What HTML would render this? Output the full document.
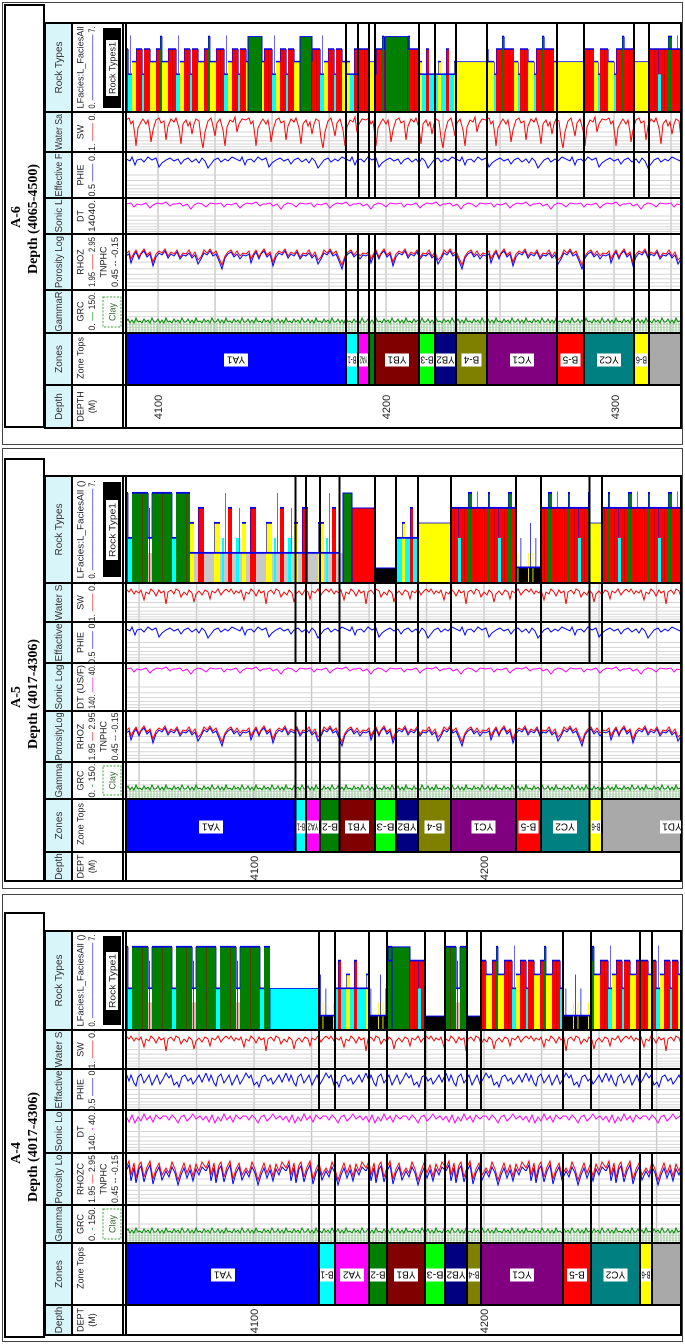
<!DOCTYPE html>
<html><head><meta charset="utf-8"><style>html,body{margin:0;padding:0;background:#fff}svg{display:block}</style></head>
<body>
<svg width="685" height="1344" xmlns="http://www.w3.org/2000/svg" xmlns:xlink="http://www.w3.org/1999/xlink" font-family="'Liberation Sans', sans-serif">
<defs>
<clipPath id="c0"><rect x="126" y="23" width="555" height="405"/></clipPath>
<clipPath id="c1"><rect x="126" y="476" width="555" height="405"/></clipPath>
<clipPath id="c2"><rect x="126" y="931" width="555" height="404"/></clipPath>

<pattern id="mA" patternUnits="userSpaceOnUse" width="48" height="88" viewBox="0 0 24 7" preserveAspectRatio="none">
<rect x="0" y="4" width="24" height="3" fill="#0ff"/><rect x="0" y="2" width="3" height="5" fill="#f00"/><rect x="3" y="3" width="3" height="4" fill="#ff0"/><rect x="6" y="2" width="2" height="5" fill="#f00"/><rect x="8" y="1" width="1" height="6" fill="#007f00"/><rect x="9" y="3" width="3" height="4" fill="#ff0"/><rect x="12" y="2" width="4" height="5" fill="#f00"/><rect x="18" y="3" width="2" height="4" fill="#ff0"/><rect x="20" y="2" width="3" height="5" fill="#f00"/>
<g fill="#a00"><rect x="1.5" y="2" width=".25" height="5"/><rect x="14" y="2" width=".25" height="5"/><rect x="21.5" y="2" width=".25" height="5"/></g>
<g fill="#00e"><rect x="0" y="1.93" width="3" height=".12"/><rect x="3" y="2.93" width="3" height=".12"/><rect x="6" y="1.93" width="2" height=".12"/><rect x="8" y=".93" width="1" height=".12"/><rect x="9" y="2.93" width="3" height=".12"/><rect x="12" y="1.93" width="4" height=".12"/><rect x="16" y="3.93" width="2" height=".12"/><rect x="18" y="2.93" width="2" height=".12"/><rect x="20" y="1.93" width="3" height=".12"/><rect x="23" y="3.93" width="1" height=".12"/><rect x="3" y="2" width=".3" height="1"/><rect x="6" y="2" width=".3" height="1"/><rect x="8" y="1" width=".3" height="1"/><rect x="8.9" y="1" width=".3" height="2"/><rect x="12" y="2" width=".3" height="1"/><rect x="16" y="2" width=".3" height="2"/><rect x="17" y=".9" width=".3" height="3"/><rect x="20" y="2" width=".3" height="1"/><rect x="23" y="2" width=".3" height="2"/></g>
</pattern>
<pattern id="mRY" patternUnits="userSpaceOnUse" width="40" height="88" viewBox="0 0 20 7" preserveAspectRatio="none">
<rect x="0" y="4" width="20" height="3" fill="#0ff"/><rect x="0" y="2" width="4" height="5" fill="#f00"/><rect x="4" y="3" width="3" height="4" fill="#ff0"/><rect x="8" y="2" width="3" height="5" fill="#f00"/><rect x="11" y="1" width="1" height="6" fill="#007f00"/><rect x="12" y="2" width="5" height="5" fill="#f00"/><rect x="17" y="3" width="2" height="4" fill="#ff0"/>
<g fill="#a00"><rect x="2" y="2" width=".25" height="5"/><rect x="14.5" y="2" width=".25" height="5"/></g>
<g fill="#00e"><rect x="0" y="1.93" width="4" height=".12"/><rect x="4" y="2.93" width="3" height=".12"/><rect x="7" y="3.93" width="1" height=".12"/><rect x="8" y="1.93" width="3" height=".12"/><rect x="11" y=".93" width="1" height=".12"/><rect x="12" y="1.93" width="5" height=".12"/><rect x="17" y="2.93" width="2" height=".12"/><rect x="19" y="3.93" width="1" height=".12"/><rect x="4" y="2" width=".3" height="1"/><rect x="7" y="3" width=".3" height="1"/><rect x="8" y="2" width=".3" height="2"/><rect x="11" y="1" width=".3" height="1"/><rect x="12" y="1" width=".3" height="1"/><rect x="19" y="3" width=".3" height="1"/></g>
</pattern>
<pattern id="mC" patternUnits="userSpaceOnUse" width="36" height="88" viewBox="0 0 18 7" preserveAspectRatio="none">
<rect x="0" y="4" width="18" height="3" fill="#0ff"/><rect x="3" y="3" width="1.5" height="4" fill="#ff0"/><rect x="7" y="2" width="1.5" height="5" fill="#f00"/><rect x="11" y="3" width="2" height="4" fill="#ff0"/><rect x="15" y="2" width="1.5" height="5" fill="#f00"/>
<g fill="#00e"><rect x="0" y="3.93" width="18" height=".12"/><rect x="3" y="3" width=".3" height="1"/><rect x="7" y="2" width=".3" height="2"/><rect x="11" y="3" width=".3" height="1"/><rect x="15" y="2" width=".3" height="2"/><rect x="3" y="2.93" width="1.5" height=".12"/><rect x="11" y="2.93" width="2" height=".12"/><rect x="7" y="1.93" width="1.5" height=".12"/><rect x="15" y="1.93" width="1.5" height=".12"/></g>
</pattern>
<pattern id="mR" patternUnits="userSpaceOnUse" width="40" height="88" viewBox="0 0 20 7" preserveAspectRatio="none">
<rect x="0" y="2" width="20" height="5" fill="#f00"/><rect x="4" y="1" width="1" height="6" fill="#007f00"/><rect x="9" y="4" width="1.5" height="3" fill="#0ff"/><rect x="14" y="1" width="2" height="6" fill="#007f00"/>
<g fill="#a00"><rect x="2" y="2" width=".25" height="5"/><rect x="7" y="2" width=".25" height="5"/><rect x="12" y="2" width=".25" height="5"/><rect x="17.5" y="2" width=".25" height="5"/></g>
<g fill="#00e"><rect x="0" y="1.93" width="20" height=".12"/><rect x="4" y=".93" width="1" height=".12"/><rect x="14" y=".93" width="2" height=".12"/><rect x="4" y="1" width=".3" height="1"/><rect x="14" y="1" width=".3" height="1"/><rect x="9" y="2" width=".3" height="2"/><rect x="18.7" y=".9" width=".3" height="1.1"/></g>
</pattern>
<pattern id="mG" patternUnits="userSpaceOnUse" width="44" height="88" viewBox="0 0 22 7" preserveAspectRatio="none">
<rect x="0" y="5" width="22" height="2" fill="#e8b8b8"/><rect x="0" y="1" width="8" height="6" fill="#007f00"/><rect x="8.5" y="2" width=".5" height="5" fill="#f00"/><rect x="10" y="1" width="10" height="6" fill="#007f00"/><rect x="20" y="4" width="2" height="3" fill="#0ff"/><rect x="5" y="1" width=".25" height="6" fill="#a00"/><rect x="15" y="1" width=".25" height="6" fill="#a00"/>
<g fill="#00e"><rect x="0" y=".93" width="8" height=".12"/><rect x="10" y=".93" width="10" height=".12"/><rect x="20" y="3.93" width="2" height=".12"/><rect x="8" y="1" width=".3" height="3"/><rect x="8" y="3.93" width="2" height=".12"/><rect x="9.8" y="1" width=".3" height="3"/><rect x="19.9" y="1" width=".3" height="3"/></g>
</pattern>
<pattern id="mGY" patternUnits="userSpaceOnUse" width="52" height="88" viewBox="0 0 26 7" preserveAspectRatio="none">
<rect x="0" y="5" width="26" height="2" fill="#c8c8c8"/><rect x="3" y="3" width="3" height="4" fill="#ff0"/><rect x="7" y="4" width="1" height="3" fill="#0ff"/><rect x="10" y="2" width="2" height="5" fill="#f00"/><rect x="14" y="4" width="1.5" height="3" fill="#0ff"/><rect x="17" y="3" width="2" height="4" fill="#ff0"/><rect x="21" y="2" width="3" height="5" fill="#f00"/>
<g fill="#00e"><rect x="0" y="4.93" width="26" height=".12"/><rect x="3" y="2.93" width="3" height=".12"/><rect x="10" y="1.93" width="2" height=".12"/><rect x="17" y="2.93" width="2" height=".12"/><rect x="21" y="1.93" width="3" height=".12"/><rect x="8.5" y="1" width=".3" height="4"/><rect x="15.5" y="2" width=".3" height="3"/><rect x="3" y="3" width=".3" height="2"/><rect x="21" y="2" width=".3" height="3"/></g>
</pattern>
<pattern id="mK" patternUnits="userSpaceOnUse" width="15" height="88" viewBox="0 0 10 7" preserveAspectRatio="none">
<rect x="0" y="6" width="10" height="1" fill="#000"/><rect x="2" y="5" width=".6" height="2" fill="#ff0"/><rect x="5" y="5" width=".6" height="2" fill="#ff0"/>
<g fill="#00e"><rect x="0" y="5.9" width="10" height=".12"/><rect x="3.5" y="3" width=".5" height="3"/><rect x="7" y="4" width=".5" height="2"/></g>
</pattern>

<pattern id="a6A" xlink:href="#mA" y="24" height="88"/><pattern id="a6RY" xlink:href="#mRY" y="24" height="88"/><pattern id="a6C" xlink:href="#mC" y="24" height="88"/><pattern id="a6R" xlink:href="#mR" y="24" height="88"/>
<pattern id="a5G" xlink:href="#mG" y="478" height="105"/><pattern id="a5GY" xlink:href="#mGY" y="478" height="105"/><pattern id="a5C" xlink:href="#mC" y="478" height="105"/><pattern id="a5R" xlink:href="#mR" y="478" height="105"/><pattern id="a5K" xlink:href="#mK" y="478" height="105"/>
<pattern id="a4G" xlink:href="#mG" y="933" height="97"/><pattern id="a4K" xlink:href="#mK" y="933" height="97"/><pattern id="a4C" xlink:href="#mC" y="933" height="97"/><pattern id="a4R" xlink:href="#mR" y="933" height="97"/><pattern id="a4A" xlink:href="#mA" y="933" height="97"/><pattern id="a4RY" xlink:href="#mRY" y="933" height="97"/>

<pattern id="sw1" patternUnits="userSpaceOnUse" width="120" height="60"><polyline fill="none" stroke="#f00" points="0,8 3,6 5,12 7,9 9,24 10,34 12,16 15,10 17,7 20,12 22,8 24,20 25,30 27,18 30,8 33,6 35,11 38,9 40,28 42,14 45,7 48,10 50,6 53,16 55,32 57,12 60,8 62,14 64,10 66,22 68,12 70,7 73,9 75,26 77,36 79,20 82,9 85,6 87,14 89,24 91,11 94,7 97,18 99,34 101,15 104,8 107,10 109,5 111,20 113,12 116,7 120,8"/></pattern>
<pattern id="sw2" patternUnits="userSpaceOnUse" width="100" height="60"><polyline fill="none" stroke="#f00" points="0,6 3,9 5,6 8,11 10,8 13,10 15,7 18,17 20,9 23,11 25,6 28,9 30,13 33,7 35,10 38,8 40,21 42,9 45,7 48,11 50,6 53,8 55,14 58,9 61,12 63,7 66,10 68,19 70,11 73,8 76,12 79,7 82,9 84,16 86,8 89,10 92,6 95,12 97,9 100,6"/></pattern>
<pattern id="ph1" patternUnits="userSpaceOnUse" width="110" height="60"><polyline fill="none" stroke="#00f" points="0,7 4,9 6,5 9,13 11,8 15,7 18,10 22,5 26,8 30,6 33,15 36,11 40,8 44,6 48,9 52,7 55,12 58,8 62,6 66,10 70,7 73,11 76,6 79,9 82,16 85,12 88,8 92,6 95,10 99,7 102,9 106,5 110,7"/></pattern>
<pattern id="ph2" patternUnits="userSpaceOnUse" width="80" height="60"><polyline fill="none" stroke="#00f" points="0,4 3,12 5,6 8,14 10,17 12,8 15,5 18,14 20,11 23,6 26,16 28,12 31,6 34,15 37,10 40,4 43,9 45,6 48,16 51,13 53,18 56,8 59,6 62,12 65,9 67,15 70,11 73,6 76,13 80,4"/></pattern>
<pattern id="so1" patternUnits="userSpaceOnUse" width="90" height="60"><polyline fill="none" stroke="#f0f" points="0,6 5,5 8,9 11,6 15,7 20,5 24,10 27,7 31,5 36,6 40,4 44,8 47,6 50,6 54,5 57,8 61,6 65,11 68,7 72,5 76,6 80,9 84,5 90,6"/></pattern>
<pattern id="so2" patternUnits="userSpaceOnUse" width="80" height="60"><polyline fill="none" stroke="#f0f" points="0,6 3,12 6,5 9,13 12,7 15,11 18,4 21,10 24,6 27,12 30,5 34,9 37,6 40,6 43,10 46,5 49,8 52,13 55,7 58,5 61,11 64,8 67,4 70,9 74,6 77,10 80,6"/></pattern>
<pattern id="pr1" patternUnits="userSpaceOnUse" width="120" height="70"><polyline fill="none" stroke="#00f" points="0,22 3,20 5,29 8,21 10,18 13,25 15,20 18,17 21,23 24,20 27,32 30,23 33,19 36,21 39,17 42,24 45,20 48,22 51,18 54,25 57,21 60,22 63,19 66,24 69,21 72,30 75,25 78,19 81,21 84,17 87,22 90,20 93,27 96,35 99,24 102,20 105,18 108,23 111,20 114,25 117,21 120,22"/><polyline fill="none" stroke="#f00" points="0,20 3,17 5,25 8,19 10,16 13,23 15,19 18,15 21,21 24,18 27,28 30,20 33,17 36,19 39,15 42,22 45,18 48,20 51,16 54,23 57,19 60,20 63,16 66,22 69,18 72,26 75,23 78,16 81,19 84,15 87,20 90,17 93,24 96,31 99,22 102,18 105,16 108,21 111,17 114,22 117,19 120,20"/></pattern>
<pattern id="pr2" patternUnits="userSpaceOnUse" width="80" height="70"><polyline fill="none" stroke="#00f" points="0,18 3,12 5,28 8,15 10,30 13,16 15,13 18,29 21,18 24,12 27,31 30,20 33,14 36,27 40,18 43,24 46,14 49,20 52,32 55,22 58,15 61,25 64,17 67,28 70,16 73,22 76,14 80,18"/><polyline fill="none" stroke="#f00" points="0,15 3,8 5,22 8,10 10,25 13,12 15,9 18,24 21,14 24,8 27,26 30,16 33,10 36,22 40,15 43,20 46,9 49,16 52,27 55,18 58,10 61,20 64,12 67,23 70,11 73,18 76,9 80,15"/></pattern>
<pattern id="gr1" patternUnits="userSpaceOnUse" width="30" height="60"><path stroke="#8c8" d="M1,33V60M4,33V60M7,32V60M10,30V60M13,33V60M16,34V60M19,31V60M22,32V60M25,33V60M28,32V60"/><polyline fill="none" stroke="#080" points="0,32 2,29 4,33 6,30 8,33 10,28 12,32 14,31 16,33 18,29 20,32 22,30 24,33 26,28 28,32 30,32"/></pattern>
<pattern id="gr2" patternUnits="userSpaceOnUse" width="30" height="60"><path stroke="#8c8" d="M1,28V60M4,28V60M7,27V60M10,25V60M13,28V60M16,29V60M19,26V60M22,27V60M25,28V60M28,27V60"/><polyline fill="none" stroke="#080" points="0,27 2,24 4,28 6,25 8,28 10,23 12,27 14,26 16,28 18,24 20,27 22,25 24,28 26,23 28,27 30,27"/></pattern>

<pattern id="c6sw" xlink:href="#sw1" x="126" y="112"/><pattern id="c6ph" xlink:href="#ph1" x="126" y="152"/><pattern id="c6so" xlink:href="#so1" x="126" y="198"/><pattern id="c6pr" xlink:href="#pr1" x="126" y="234"/><pattern id="c6gr" xlink:href="#gr1" x="126" y="290"/>
<pattern id="c5sw" xlink:href="#sw2" x="126" y="583"/><pattern id="c5ph" xlink:href="#ph1" x="126" y="622"/><pattern id="c5so" xlink:href="#so1" x="126" y="663"/><pattern id="c5pr" xlink:href="#pr1" x="126" y="711"/><pattern id="c5gr" xlink:href="#gr2" x="126" y="762"/>
<pattern id="c4sw" xlink:href="#sw2" x="126" y="1030"/><pattern id="c4ph" xlink:href="#ph2" x="126" y="1069"/><pattern id="c4so" xlink:href="#so2" x="126" y="1110"/><pattern id="c4pr" xlink:href="#pr2" x="126" y="1153"/><pattern id="c4gr" xlink:href="#gr2" x="126" y="1205"/>

<pattern id="vg6" patternUnits="userSpaceOnUse" x="157.4" y="0" width="57" height="10"><rect width="1.3" height="10" fill="#c4c4c4"/></pattern>
<pattern id="vg5" patternUnits="userSpaceOnUse" x="253.4" y="0" width="57.5" height="10"><rect width="1.3" height="10" fill="#c4c4c4"/></pattern>
</defs>
<rect width="685" height="1344" fill="#fff"/>
<rect x="2.5" y="2.5" width="680" height="442" fill="none" stroke="#444" stroke-width="1"/>
<rect x="2.5" y="448.5" width="680" height="440" fill="none" stroke="#444" stroke-width="1"/>
<rect x="2.5" y="894.5" width="680" height="447" fill="none" stroke="#444" stroke-width="1"/>

<rect x="45" y="23" width="27" height="405" fill="#d8f5fa"/>
<rect x="45" y="476" width="27" height="405" fill="#d8f5fa"/>
<rect x="45" y="931" width="27" height="404" fill="#d8f5fa"/>

<rect x="126" y="112" width="555" height="221" fill="url(#vg6)"/>
<rect x="126" y="583" width="555" height="216" fill="url(#vg5)"/>
<rect x="126" y="1030" width="555" height="213" fill="url(#vg5)"/>
<path stroke="#d6d6d6" stroke-width="1" fill="none" d="M126,132H681M126,136.8H681M126,140.8H681M126,144H681M126,146.8H681M126,149.2H681M126,175H681M126,180.5H681M126,185.1H681M126,188.8H681M126,192H681M126,194.8H681M126,216H681M126,220.3H681M126,223.9H681M126,226.8H681M126,229.3H681M126,231.5H681M126,262H681M126,268.7H681M126,274.3H681M126,278.8H681M126,282.7H681M126,286.1H681M126,311.5H681M126,316.7H681M126,321H681M126,324.4H681M126,327.4H681M126,330H681
M126,602.5H681M126,607.2H681M126,611.1H681M126,614.2H681M126,616.9H681M126,619.3H681M126,642.5H681M126,647.4H681M126,651.5H681M126,654.8H681M126,657.7H681M126,660.1H681M126,687H681M126,692.8H681M126,697.6H681M126,701.4H681M126,704.8H681M126,707.6H681M126,736.5H681M126,742.6H681M126,747.7H681M126,751.8H681M126,755.4H681M126,758.4H681M126,780.5H681M126,784.9H681M126,788.6H681M126,791.6H681M126,794.2H681M126,796.4H681
M126,1049.5H681M126,1054.2H681M126,1058.1H681M126,1061.2H681M126,1063.9H681M126,1066.3H681M126,1089.5H681M126,1094.4H681M126,1098.5H681M126,1101.8H681M126,1104.7H681M126,1107.1H681M126,1131.5H681M126,1136.7H681M126,1141H681M126,1144.4H681M126,1147.4H681M126,1150H681M126,1179H681M126,1185.2H681M126,1190.4H681M126,1194.6H681M126,1198.2H681M126,1201.4H681M126,1224H681M126,1228.6H681M126,1232.4H681M126,1235.4H681M126,1238.1H681M126,1240.3H681"/>

<rect x="126" y="24" width="122" height="88" fill="url(#a6A)"/>
<rect x="248" y="36.6" width="14" height="75.4" fill="#007f00" stroke="#00e"/>
<rect x="262" y="24" width="38" height="88" fill="url(#a6A)"/>
<rect x="300" y="36.6" width="12" height="75.4" fill="#007f00" stroke="#00e"/>
<rect x="312" y="24" width="34" height="88" fill="url(#a6A)"/>
<rect x="346" y="24" width="12" height="88" fill="url(#a6C)"/>
<rect x="358" y="24" width="11" height="88" fill="url(#a6R)"/>
<rect x="369" y="61.7" width="6" height="50.3" fill="#ff0" stroke="#00e" stroke-width=".8"/>
<rect x="375" y="24" width="10" height="88" fill="url(#a6RY)"/>
<rect x="385" y="36.6" width="23" height="75.4" fill="#007f00" stroke="#00e"/>
<rect x="408" y="24" width="11" height="88" fill="url(#a6R)"/>
<rect x="419" y="24" width="37" height="88" fill="url(#a6C)"/>
<rect x="456" y="61.7" width="31" height="50.3" fill="#ff0" stroke="#00e" stroke-width=".8"/>
<rect x="487" y="24" width="70" height="88" fill="url(#a6RY)"/>
<rect x="557" y="61.7" width="27" height="50.3" fill="#ff0" stroke="#00e" stroke-width=".8"/>
<rect x="584" y="24" width="50" height="88" fill="url(#a6RY)"/>
<rect x="634" y="61.7" width="15" height="50.3" fill="#ff0" stroke="#00e" stroke-width=".8"/>
<rect x="649" y="24" width="32" height="88" fill="url(#a6R)"/>

<rect x="126" y="478" width="64" height="105" fill="url(#a5G)"/>
<rect x="190" y="478" width="150" height="105" fill="url(#a5GY)"/>
<rect x="340" y="553" width="35" height="30" fill="#c8c8c8"/>
<rect x="343" y="493" width="9" height="90" fill="#007f00" stroke="#00e"/>
<rect x="352" y="508" width="23" height="75" fill="#f00" stroke="#00e"/>
<rect x="375" y="568" width="21" height="15" fill="#000" stroke="#00e"/>
<rect x="396" y="478" width="22" height="105" fill="url(#a5C)"/>
<rect x="418" y="523" width="33" height="60" fill="#ff0" stroke="#00e" stroke-width=".8"/>
<rect x="451" y="478" width="65" height="105" fill="url(#a5R)"/>
<rect x="516" y="478" width="25" height="105" fill="url(#a5K)"/>
<rect x="541" y="478" width="49" height="105" fill="url(#a5R)"/>
<rect x="590" y="523" width="12" height="60" fill="#ff0" stroke="#00e" stroke-width=".8"/>
<rect x="602" y="478" width="79" height="105" fill="url(#a5R)"/>

<rect x="126" y="933" width="144" height="97" fill="url(#a4G)"/>
<rect x="270" y="988.4" width="49" height="41.6" fill="#0ff" stroke="#00e" stroke-width=".8"/>
<rect x="319" y="933" width="16" height="97" fill="url(#a4K)"/>
<rect x="335" y="933" width="34" height="97" fill="url(#a4C)"/>
<rect x="369" y="933" width="18" height="97" fill="url(#a4K)"/>
<rect x="387" y="933" width="5" height="97" fill="url(#a4R)"/>
<rect x="392" y="946.9" width="18" height="83.1" fill="#007f00" stroke="#00e"/>
<rect x="410" y="933" width="15" height="97" fill="url(#a4R)"/>
<rect x="425" y="1016.1" width="20" height="13.9" fill="#000" stroke="#00e"/>
<rect x="445" y="933" width="22" height="97" fill="url(#a4G)"/>
<rect x="467" y="1016.1" width="14" height="13.9" fill="#000" stroke="#00e"/>
<rect x="481" y="933" width="82" height="97" fill="url(#a4A)"/>
<rect x="563" y="933" width="28" height="97" fill="url(#a4K)"/>
<rect x="591" y="933" width="49" height="97" fill="url(#a4A)"/>
<rect x="640" y="933" width="12" height="97" fill="url(#a4RY)"/>
<rect x="652" y="933" width="29" height="97" fill="url(#a4A)"/>

<rect x="126" y="113" width="555" height="39" fill="url(#c6sw)"/>
<rect x="126" y="153" width="555" height="45" fill="url(#c6ph)"/>
<rect x="126" y="199" width="555" height="35" fill="url(#c6so)"/>
<rect x="126" y="235" width="555" height="55" fill="url(#c6pr)"/>
<rect x="126" y="291" width="555" height="42" fill="url(#c6gr)"/>
<rect x="126" y="584" width="555" height="38" fill="url(#c5sw)"/>
<rect x="126" y="623" width="555" height="40" fill="url(#c5ph)"/>
<rect x="126" y="664" width="555" height="47" fill="url(#c5so)"/>
<rect x="126" y="712" width="555" height="50" fill="url(#c5pr)"/>
<rect x="126" y="763" width="555" height="36" fill="url(#c5gr)"/>
<rect x="126" y="1031" width="555" height="38" fill="url(#c4sw)"/>
<rect x="126" y="1070" width="555" height="40" fill="url(#c4ph)"/>
<rect x="126" y="1111" width="555" height="42" fill="url(#c4so)"/>
<rect x="126" y="1154" width="555" height="51" fill="url(#c4pr)"/>
<rect x="126" y="1206" width="555" height="37" fill="url(#c4gr)"/>

<g>
<rect x="126" y="333" width="220" height="52" fill="#00f"/><rect x="346" y="333" width="12" height="52" fill="#0ff"/><rect x="358" y="333" width="11" height="52" fill="#f0f"/><rect x="369" y="333" width="6" height="52" fill="#007f00"/><rect x="375" y="333" width="44" height="52" fill="#800000"/><rect x="419" y="333" width="16" height="52" fill="#0f0"/><rect x="435" y="333" width="21" height="52" fill="#000080"/><rect x="456" y="333" width="31" height="52" fill="#808000"/><rect x="487" y="333" width="70" height="52" fill="#800080"/><rect x="557" y="333" width="27" height="52" fill="#f00"/><rect x="584" y="333" width="50" height="52" fill="#008080"/><rect x="634" y="333" width="15" height="52" fill="#ff0"/><rect x="649" y="333" width="32" height="52" fill="#a9a9a9"/>
<rect x="126" y="799" width="169.5" height="53" fill="#00f"/><rect x="295.5" y="799" width="10.5" height="53" fill="#0ff"/><rect x="306" y="799" width="14" height="53" fill="#f0f"/><rect x="320" y="799" width="19.5" height="53" fill="#007f00"/><rect x="339.5" y="799" width="35.5" height="53" fill="#800000"/><rect x="375" y="799" width="21" height="53" fill="#0f0"/><rect x="396" y="799" width="22" height="53" fill="#000080"/><rect x="418" y="799" width="33" height="53" fill="#808000"/><rect x="451" y="799" width="65" height="53" fill="#800080"/><rect x="516" y="799" width="25" height="53" fill="#f00"/><rect x="541" y="799" width="48.5" height="53" fill="#008080"/><rect x="589.5" y="799" width="12.5" height="53" fill="#ff0"/><rect x="602" y="799" width="79" height="53" fill="#a9a9a9"/>
<rect x="126" y="1243" width="193" height="62" fill="#00f"/><rect x="319" y="1243" width="16" height="62" fill="#0ff"/><rect x="335" y="1243" width="34" height="62" fill="#f0f"/><rect x="369" y="1243" width="18" height="62" fill="#007f00"/><rect x="387" y="1243" width="38" height="62" fill="#800000"/><rect x="425" y="1243" width="20" height="62" fill="#0f0"/><rect x="445" y="1243" width="22" height="62" fill="#000080"/><rect x="467" y="1243" width="14" height="62" fill="#808000"/><rect x="481" y="1243" width="82" height="62" fill="#800080"/><rect x="563" y="1243" width="28" height="62" fill="#f00"/><rect x="591" y="1243" width="49" height="62" fill="#008080"/><rect x="640" y="1243" width="12" height="62" fill="#ff0"/><rect x="652" y="1243" width="29" height="62" fill="#a9a9a9"/>
</g>

<path stroke="#000" stroke-width="2" fill="none" d="M346,23V198M346,234V385M358,23V198M358,234V385M369,23V198M369,234V385M375,23V198M375,234V385M419,23V198M419,234V385M435,23V198M435,234V385M456,23V198M456,234V385M487,23V198M487,234V385M557,23V198M557,234V385M584,23V198M584,234V385M634,23V198M634,234V385M649,23V198M649,234V385
M295.5,476V663M295.5,711V852M306,476V663M306,711V852M320,476V663M320,711V852M339.5,476V663M339.5,711V852M375,476V663M375,711V852M396,476V663M396,711V852M418,476V663M418,711V852M451,476V663M451,711V852M516,476V663M516,711V852M541,476V663M541,711V852M589.5,476V663M589.5,711V852M602,476V663M602,711V852
M319,931V1110M319,1153V1305M335,931V1110M335,1153V1305M369,931V1110M369,1153V1305M387,931V1110M387,1153V1305M425,931V1110M425,1153V1305M445,931V1110M445,1153V1305M467,931V1110M467,1153V1305M481,931V1110M481,1153V1305M563,931V1110M563,1153V1305M591,931V1110M591,1153V1305M640,931V1110M640,1153V1305M652,931V1110M652,1153V1305"/>

<path stroke="#000" stroke-width="2" fill="none" d="M44,23H682M44,112H682M44,152H682M44,198H682M44,234H682M44,290H682M44,333H682M44,385H682M44,428H682M45,23V428M72,23V428M123,23V428M126,23V428M681,23V428
M44,476H682M44,583H682M44,622H682M44,663H682M44,711H682M44,762H682M44,799H682M44,852H682M44,881H682M45,476V881M72,476V881M123,476V881M126,476V881M681,476V881
M44,931H682M44,1030H682M44,1069H682M44,1110H682M44,1153H682M44,1205H682M44,1243H682M44,1305H682M44,1335H682M45,931V1335M72,931V1335M123,931V1335M126,931V1335M681,931V1335"/>

<rect x="5" y="5" width="39" height="422" fill="#fff" stroke="#000" stroke-width="2"/>
<rect x="5" y="459" width="39" height="422" fill="#fff" stroke="#000" stroke-width="2"/>
<rect x="5" y="913" width="39" height="424" fill="#fff" stroke="#000" stroke-width="2"/>
<g font-family="'Liberation Serif', serif" font-weight="bold" text-anchor="middle" fill="#000">
<text transform="translate(20,217) rotate(-90)" font-size="14">A-6</text>
<text transform="translate(37,219) rotate(-90)" font-size="14">Depth (4065-4500)</text>
<text transform="translate(20,697) rotate(-90)" font-size="14">A-5</text>
<text transform="translate(37,694) rotate(-90)" font-size="14">Depth (4017-4306)</text>
<text transform="translate(20,1153) rotate(-90)" font-size="14">A-4</text>
<text transform="translate(37,1147) rotate(-90)" font-size="14">Depth (4017-4306)</text>
</g>

<g font-size="10" fill="#333" text-anchor="middle">
<text transform="translate(62,67.5) rotate(-90)">Rock Types</text>
<text transform="translate(62,132) rotate(-90)" textLength="36" lengthAdjust="spacingAndGlyphs">Water Sa</text>
<text transform="translate(62,175) rotate(-90)" textLength="43" lengthAdjust="spacingAndGlyphs">Effective F</text>
<text transform="translate(62,216) rotate(-90)" textLength="33" lengthAdjust="spacingAndGlyphs">Sonic L</text>
<text transform="translate(62,262) rotate(-90)" textLength="52" lengthAdjust="spacingAndGlyphs">Porosity Log</text>
<text transform="translate(62,311.5) rotate(-90)" textLength="40" lengthAdjust="spacingAndGlyphs">GammaR</text>
<text transform="translate(62,359) rotate(-90)">Zones</text>
<text transform="translate(62,406.5) rotate(-90)">Depth</text>

<text transform="translate(62,529.5) rotate(-90)">Rock Types</text>
<text transform="translate(62,602.5) rotate(-90)">Water S</text>
<text transform="translate(62,642.5) rotate(-90)" textLength="38" lengthAdjust="spacingAndGlyphs">Effactive</text>
<text transform="translate(62,687) rotate(-90)" textLength="45" lengthAdjust="spacingAndGlyphs">Sonic Log</text>
<text transform="translate(62,736.5) rotate(-90)" textLength="48" lengthAdjust="spacingAndGlyphs">PorosityLog</text>
<text transform="translate(62,780.5) rotate(-90)" textLength="34" lengthAdjust="spacingAndGlyphs">Gamma</text>
<text transform="translate(62,825.5) rotate(-90)">Zones</text>
<text transform="translate(62,866.5) rotate(-90)">Depth</text>

<text transform="translate(62,980.5) rotate(-90)">Rock Types</text>
<text transform="translate(62,1049.5) rotate(-90)">Water S</text>
<text transform="translate(62,1089.5) rotate(-90)" textLength="38" lengthAdjust="spacingAndGlyphs">Effactive</text>
<text transform="translate(62,1131.5) rotate(-90)" textLength="40" lengthAdjust="spacingAndGlyphs">Sonic Lo</text>
<text transform="translate(62,1179) rotate(-90)" textLength="49" lengthAdjust="spacingAndGlyphs">Porosity Lo</text>
<text transform="translate(62,1224) rotate(-90)" textLength="35" lengthAdjust="spacingAndGlyphs">Gamma</text>
<text transform="translate(62,1274) rotate(-90)">Zones</text>
<text transform="translate(62,1320) rotate(-90)">Depth</text>
</g>

<g font-size="9" fill="#222" text-anchor="middle">
<text transform="translate(83.5,67.5) rotate(-90)" textLength="82" lengthAdjust="spacingAndGlyphs">LFacies:L_FaciesAll</text>
<text transform="translate(95,67.5) rotate(-90)" textLength="82" lengthAdjust="spacingAndGlyphs">0. <tspan fill="#00f">—————————</tspan> 7.</text>
<rect x="103" y="28" width="18" height="80" fill="#000"/><rect x="106" y="40" width="12" height="56" fill="#fff"/>
<text transform="translate(115.5,68) rotate(-90)" textLength="52" lengthAdjust="spacingAndGlyphs">Rock Types1</text>
<text transform="translate(83.5,132) rotate(-90)">SW</text>
<text transform="translate(95,132) rotate(-90)">1. <tspan fill="#f00">——</tspan> 0.</text>
<text transform="translate(83.5,175) rotate(-90)">PHIE</text>
<text transform="translate(95,175) rotate(-90)">0.5 <tspan fill="#00f">——</tspan> 0.</text>
<text transform="translate(83.5,216) rotate(-90)">DT</text>
<text transform="translate(95,216) rotate(-90)" textLength="32" lengthAdjust="spacingAndGlyphs">14040.</text>
<text transform="translate(83.5,262) rotate(-90)">RHOZ</text>
<text transform="translate(95,262) rotate(-90)" textLength="50" lengthAdjust="spacingAndGlyphs">1.95 <tspan fill="#f00">——</tspan> 2.95</text>
<text transform="translate(106.5,262) rotate(-90)">TNPHC</text>
<text transform="translate(118,262) rotate(-90)" textLength="50" lengthAdjust="spacingAndGlyphs">0.45 <tspan fill="#00f">--</tspan> -0.15</text>
<text transform="translate(83.5,311.5) rotate(-90)">GRC</text>
<text transform="translate(95,311.5) rotate(-90)" textLength="38" lengthAdjust="spacingAndGlyphs">0. <tspan fill="#080">—</tspan> 150.</text>
<rect x="103" y="297" width="18" height="30" fill="#fff" stroke="#3a3" stroke-dasharray="2,1.5"/>
<text transform="translate(115.5,312) rotate(-90)" fill="#363">Clay</text>
<text transform="translate(83.5,337) rotate(-90)" text-anchor="end">Zone Tops</text>
<text transform="translate(83.5,406.5) rotate(-90)">DEPTH</text>
<text transform="translate(95,406.5) rotate(-90)">(M)</text>

<text transform="translate(83.5,529.5) rotate(-90)" textLength="98" lengthAdjust="spacingAndGlyphs">LFacies:L_FaciesAll ()</text>
<text transform="translate(95,529.5) rotate(-90)" textLength="98" lengthAdjust="spacingAndGlyphs">0. <tspan fill="#00f">———————————</tspan> 7.</text>
<rect x="103" y="482" width="18" height="95" fill="#000"/><rect x="106" y="500" width="12" height="60" fill="#fff"/>
<text transform="translate(115.5,530) rotate(-90)" textLength="54" lengthAdjust="spacingAndGlyphs">Rock Type1</text>
<text transform="translate(83.5,602.5) rotate(-90)">SW</text>
<text transform="translate(95,602.5) rotate(-90)">1. <tspan fill="#f00">——</tspan> 0.</text>
<text transform="translate(83.5,642.5) rotate(-90)">PHIE</text>
<text transform="translate(95,642.5) rotate(-90)">0.5 <tspan fill="#00f">——</tspan> 0.</text>
<text transform="translate(83.5,687) rotate(-90)" textLength="44" lengthAdjust="spacingAndGlyphs">DT (US/F)</text>
<text transform="translate(95,687) rotate(-90)" textLength="44" lengthAdjust="spacingAndGlyphs">140. <tspan fill="#f0f">——</tspan> 40.</text>
<text transform="translate(83.5,736.5) rotate(-90)">RHOZ</text>
<text transform="translate(95,736.5) rotate(-90)" textLength="48" lengthAdjust="spacingAndGlyphs">1.95 <tspan fill="#f00">—</tspan> 2.95</text>
<text transform="translate(106.5,736.5) rotate(-90)">TNPHC</text>
<text transform="translate(118,736.5) rotate(-90)" textLength="48" lengthAdjust="spacingAndGlyphs">0.45 <tspan fill="#00f">--</tspan> -0.15</text>
<text transform="translate(83.5,780.5) rotate(-90)">GRC</text>
<text transform="translate(95,780.5) rotate(-90)" textLength="34" lengthAdjust="spacingAndGlyphs">0. <tspan fill="#080">-</tspan> 150.</text>
<rect x="103" y="766" width="18" height="29" fill="#fff" stroke="#3a3" stroke-dasharray="2,1.5"/>
<text transform="translate(115.5,780.5) rotate(-90)" fill="#363">Clay</text>
<text transform="translate(83.5,803) rotate(-90)" text-anchor="end">Zone Tops</text>
<text transform="translate(83.5,866.5) rotate(-90)">DEPT</text>
<text transform="translate(95,866.5) rotate(-90)">(M)</text>

<text transform="translate(83.5,980.5) rotate(-90)" textLength="92" lengthAdjust="spacingAndGlyphs">LFacies:L_FaciesAll ()</text>
<text transform="translate(95,980.5) rotate(-90)" textLength="92" lengthAdjust="spacingAndGlyphs">0. <tspan fill="#00f">——————————</tspan> 7.</text>
<rect x="103" y="936" width="18" height="89" fill="#000"/><rect x="106" y="952" width="12" height="58" fill="#fff"/>
<text transform="translate(115.5,981) rotate(-90)" textLength="54" lengthAdjust="spacingAndGlyphs">Rock Type1</text>
<text transform="translate(83.5,1049.5) rotate(-90)">SW</text>
<text transform="translate(95,1049.5) rotate(-90)">1. <tspan fill="#f00">——</tspan> 0.</text>
<text transform="translate(83.5,1089.5) rotate(-90)">PHIE</text>
<text transform="translate(95,1089.5) rotate(-90)">0.5 <tspan fill="#00f">——</tspan> 0.</text>
<text transform="translate(83.5,1131.5) rotate(-90)">DT</text>
<text transform="translate(95,1131.5) rotate(-90)" textLength="38" lengthAdjust="spacingAndGlyphs">140. <tspan fill="#f0f">-</tspan> 40.</text>
<text transform="translate(83.5,1179) rotate(-90)">RHOZC</text>
<text transform="translate(95,1179) rotate(-90)" textLength="48" lengthAdjust="spacingAndGlyphs">1.95 <tspan fill="#f00">—</tspan> 2.95</text>
<text transform="translate(106.5,1179) rotate(-90)">TNPHC</text>
<text transform="translate(118,1179) rotate(-90)" textLength="48" lengthAdjust="spacingAndGlyphs">0.45 <tspan fill="#00f">--</tspan> -0.15</text>
<text transform="translate(83.5,1224) rotate(-90)">GRC</text>
<text transform="translate(95,1224) rotate(-90)" textLength="34" lengthAdjust="spacingAndGlyphs">0. <tspan fill="#080">-</tspan> 150.</text>
<rect x="103" y="1209" width="18" height="30" fill="#fff" stroke="#3a3" stroke-dasharray="2,1.5"/>
<text transform="translate(115.5,1224) rotate(-90)" fill="#363">Clay</text>
<text transform="translate(83.5,1247) rotate(-90)" text-anchor="end">Zone Tops</text>
<text transform="translate(83.5,1320) rotate(-90)">DEPT</text>
<text transform="translate(95,1320) rotate(-90)">(M)</text>
</g>

<g font-size="10" fill="#000" text-anchor="middle">
<g clip-path="url(#c0)">
<g transform="translate(236,360) rotate(180)"><rect x="-12" y="-6.5" width="24" height="13" fill="#fff"/><text y="3.5">YA1</text></g>
<g transform="translate(352,360) rotate(180)"><rect x="-5" y="-6.5" width="10" height="13" fill="#fff"/><text y="3.5" textLength="9" lengthAdjust="spacingAndGlyphs">B-1</text></g>
<g transform="translate(363.5,360) rotate(180)"><rect x="-4.5" y="-6.5" width="9" height="13" fill="#fff"/><text y="3.5" textLength="8" lengthAdjust="spacingAndGlyphs">YA2</text></g>
<g transform="translate(397,360) rotate(180)"><rect x="-12" y="-6.5" width="24" height="13" fill="#fff"/><text y="3.5">YB1</text></g>
<g transform="translate(427,360) rotate(180)"><rect x="-7" y="-6.5" width="14" height="13" fill="#fff"/><text y="3.5" textLength="13" lengthAdjust="spacingAndGlyphs">B-3</text></g>
<g transform="translate(445.5,360) rotate(180)"><rect x="-9.5" y="-6.5" width="19" height="13" fill="#fff"/><text y="3.5" textLength="18" lengthAdjust="spacingAndGlyphs">YB2</text></g>
<g transform="translate(471.5,360) rotate(180)"><rect x="-10" y="-6.5" width="20" height="13" fill="#fff"/><text y="3.5">B-4</text></g>
<g transform="translate(522,360) rotate(180)"><rect x="-12" y="-6.5" width="24" height="13" fill="#fff"/><text y="3.5">YC1</text></g>
<g transform="translate(570.5,360) rotate(180)"><rect x="-10" y="-6.5" width="20" height="13" fill="#fff"/><text y="3.5">B-5</text></g>
<g transform="translate(609,360) rotate(180)"><rect x="-12" y="-6.5" width="24" height="13" fill="#fff"/><text y="3.5">YC2</text></g>
<g transform="translate(641.5,360) rotate(180)"><rect x="-6" y="-6.5" width="12" height="13" fill="#fff"/><text y="3.5" textLength="11" lengthAdjust="spacingAndGlyphs">B-6</text></g>
</g>
<g clip-path="url(#c1)">
<g transform="translate(211,827) rotate(180)"><rect x="-12" y="-6.5" width="24" height="13" fill="#fff"/><text y="3.5">YA1</text></g>
<g transform="translate(301,827) rotate(180)"><rect x="-4.5" y="-6.5" width="9" height="13" fill="#fff"/><text y="3.5" textLength="8" lengthAdjust="spacingAndGlyphs">B-1</text></g>
<g transform="translate(313,827) rotate(180)"><rect x="-6" y="-6.5" width="12" height="13" fill="#fff"/><text y="3.5" textLength="11" lengthAdjust="spacingAndGlyphs">YA2</text></g>
<g transform="translate(330,827) rotate(180)"><rect x="-8.5" y="-6.5" width="17" height="13" fill="#fff"/><text y="3.5" textLength="16" lengthAdjust="spacingAndGlyphs">B-2</text></g>
<g transform="translate(357,827) rotate(180)"><rect x="-12" y="-6.5" width="24" height="13" fill="#fff"/><text y="3.5">YB1</text></g>
<g transform="translate(385.5,827) rotate(180)"><rect x="-9.5" y="-6.5" width="19" height="13" fill="#fff"/><text y="3.5" textLength="18" lengthAdjust="spacingAndGlyphs">B-3</text></g>
<g transform="translate(407,827) rotate(180)"><rect x="-10" y="-6.5" width="20" height="13" fill="#fff"/><text y="3.5" textLength="19" lengthAdjust="spacingAndGlyphs">YB2</text></g>
<g transform="translate(434.5,827) rotate(180)"><rect x="-10" y="-6.5" width="20" height="13" fill="#fff"/><text y="3.5">B-4</text></g>
<g transform="translate(483.5,827) rotate(180)"><rect x="-12" y="-6.5" width="24" height="13" fill="#fff"/><text y="3.5">YC1</text></g>
<g transform="translate(528.5,827) rotate(180)"><rect x="-10" y="-6.5" width="20" height="13" fill="#fff"/><text y="3.5">B-5</text></g>
<g transform="translate(565,827) rotate(180)"><rect x="-12" y="-6.5" width="24" height="13" fill="#fff"/><text y="3.5">YC2</text></g>
<g transform="translate(596,827) rotate(180)"><rect x="-5" y="-6.5" width="10" height="13" fill="#fff"/><text y="3.5" textLength="9" lengthAdjust="spacingAndGlyphs">B-6</text></g>
<g transform="translate(672,827) rotate(180)"><rect x="-12" y="-6.5" width="24" height="13" fill="#fff"/><text y="3.5">YD1</text></g>
</g>
<g clip-path="url(#c2)">
<g transform="translate(223,1275) rotate(180)"><rect x="-12" y="-6.5" width="24" height="13" fill="#fff"/><text y="3.5">YA1</text></g>
<g transform="translate(327,1275) rotate(180)"><rect x="-7" y="-6.5" width="14" height="13" fill="#fff"/><text y="3.5" textLength="13" lengthAdjust="spacingAndGlyphs">B-1</text></g>
<g transform="translate(352,1275) rotate(180)"><rect x="-12" y="-6.5" width="24" height="13" fill="#fff"/><text y="3.5">YA2</text></g>
<g transform="translate(378,1275) rotate(180)"><rect x="-8" y="-6.5" width="16" height="13" fill="#fff"/><text y="3.5" textLength="15" lengthAdjust="spacingAndGlyphs">B-2</text></g>
<g transform="translate(406,1275) rotate(180)"><rect x="-12" y="-6.5" width="24" height="13" fill="#fff"/><text y="3.5">YB1</text></g>
<g transform="translate(435,1275) rotate(180)"><rect x="-9" y="-6.5" width="18" height="13" fill="#fff"/><text y="3.5" textLength="17" lengthAdjust="spacingAndGlyphs">B-3</text></g>
<g transform="translate(456,1275) rotate(180)"><rect x="-10" y="-6.5" width="20" height="13" fill="#fff"/><text y="3.5" textLength="19" lengthAdjust="spacingAndGlyphs">YB2</text></g>
<g transform="translate(474,1275) rotate(180)"><rect x="-6" y="-6.5" width="12" height="13" fill="#fff"/><text y="3.5" textLength="11" lengthAdjust="spacingAndGlyphs">B-4</text></g>
<g transform="translate(522,1275) rotate(180)"><rect x="-12" y="-6.5" width="24" height="13" fill="#fff"/><text y="3.5">YC1</text></g>
<g transform="translate(577,1275) rotate(180)"><rect x="-10" y="-6.5" width="20" height="13" fill="#fff"/><text y="3.5">B-5</text></g>
<g transform="translate(615.5,1275) rotate(180)"><rect x="-12" y="-6.5" width="24" height="13" fill="#fff"/><text y="3.5">YC2</text></g>
<g transform="translate(646,1275) rotate(180)"><rect x="-5" y="-6.5" width="10" height="13" fill="#fff"/><text y="3.5" textLength="9" lengthAdjust="spacingAndGlyphs">B-6</text></g>
</g>
</g>

<g font-size="11" fill="#222" text-anchor="middle">
<text transform="translate(162,407) rotate(-90)">4100</text>
<text transform="translate(390,407) rotate(-90)">4200</text>
<text transform="translate(619,407) rotate(-90)">4300</text>
<text transform="translate(258,868) rotate(-90)">4100</text>
<text transform="translate(488,868) rotate(-90)">4200</text>
<text transform="translate(258,1321) rotate(-90)">4100</text>
<text transform="translate(488,1321) rotate(-90)">4200</text>
</g>
</svg>
</body></html>
